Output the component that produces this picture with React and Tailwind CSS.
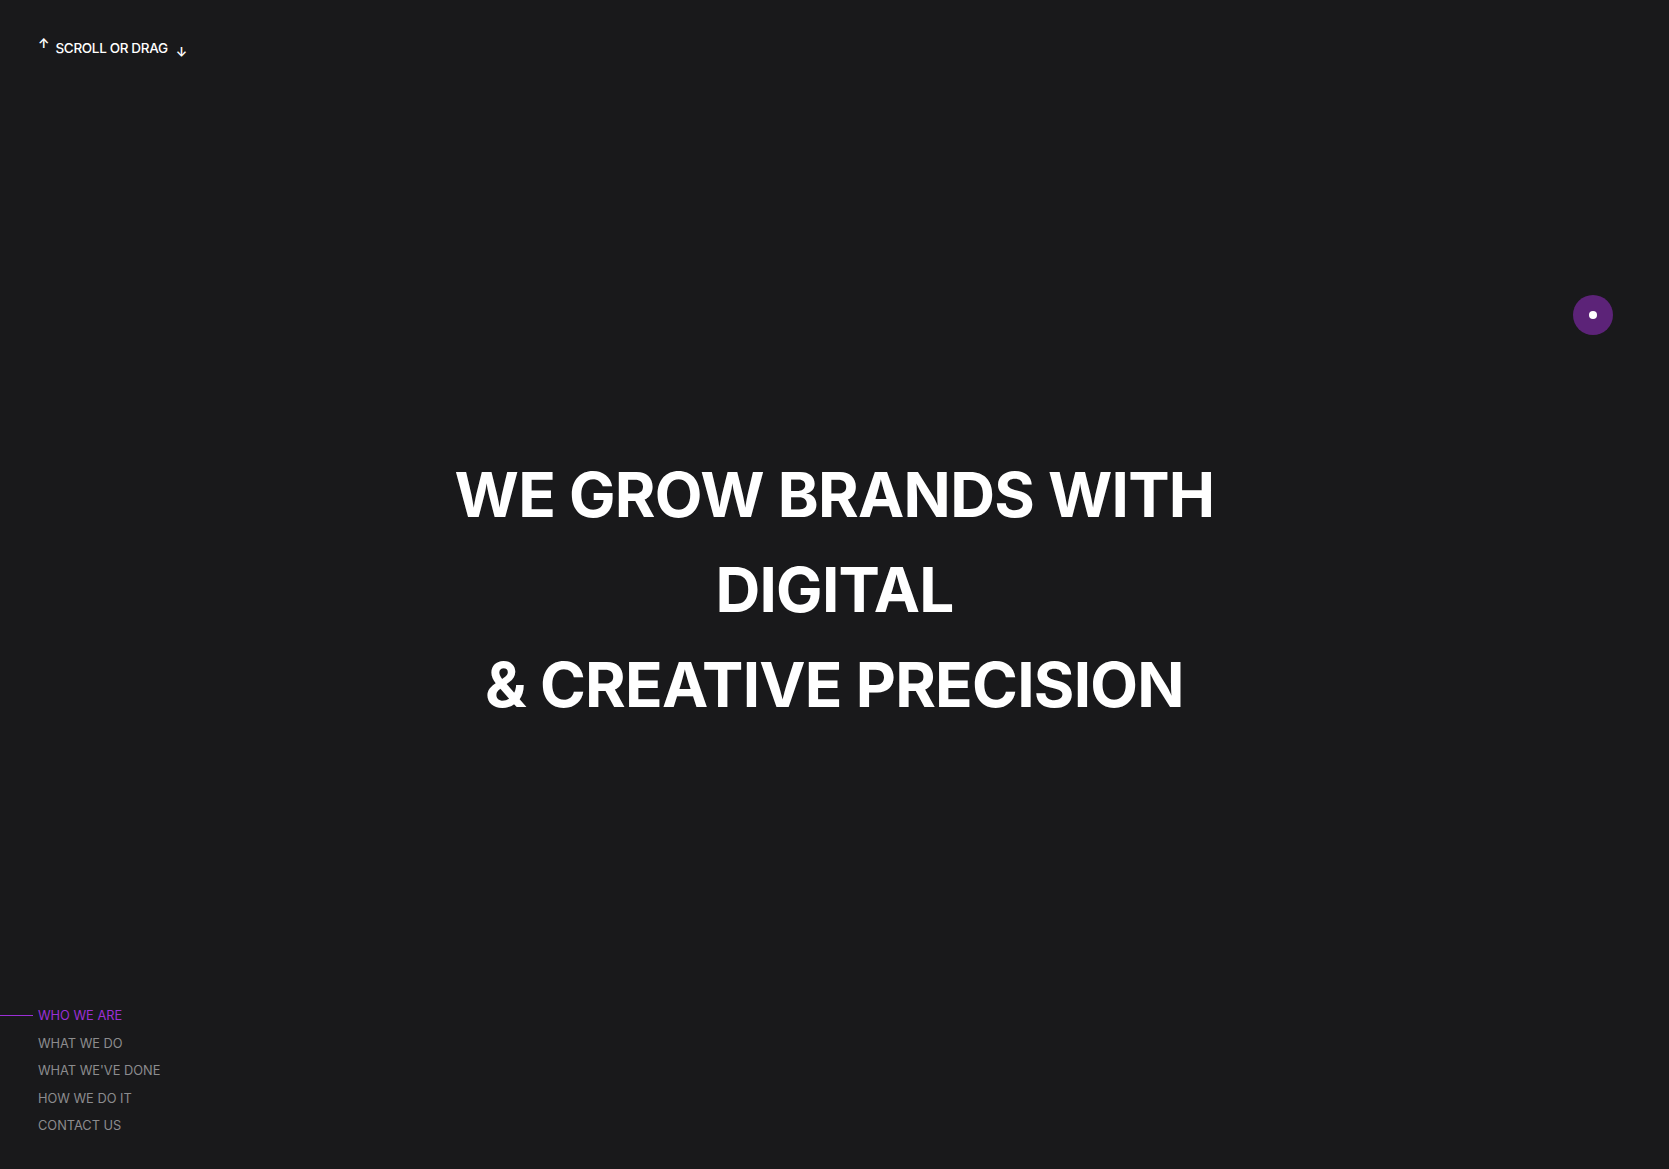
import React from "react";

const navItems = ["WHO WE ARE", "WHAT WE DO", "WHAT WE'VE DONE", "HOW WE DO IT", "CONTACT US"];

const App = () => {
  const active = 0;

  return (
    <div
      className="relative w-full h-[1169px] bg-[#19191b] overflow-hidden text-white"
      style={{ fontFamily: "Inter, 'Noto Sans', sans-serif" }}
    >
      {/* scroll hint */}
      <div className="absolute left-[38px] top-[36px] flex items-start gap-[6px]">
        <span className="text-[13px] leading-none font-semibold mt-[1px]">↑</span>
        <span className="text-[13.5px] leading-none font-medium tracking-tight mt-[6px]">SCROLL OR DRAG</span>
        <span className="text-[13px] leading-none font-semibold mt-[10px] ml-[2px]">↓</span>
      </div>

      {/* hero */}
      <main className="h-full flex items-center justify-center">
        <h1 className="text-center font-bold text-[62px] leading-[95px] tracking-[-0.012em] mt-[10px]">
          WE GROW BRANDS WITH
          <br />
          DIGITAL
          <br />
          &amp; CREATIVE PRECISION
        </h1>
      </main>

      {/* cursor dot */}
      <div className="absolute left-[1573px] top-[295px] w-[40px] h-[40px] rounded-full bg-[#5c2378] flex items-center justify-center">
        <div className="w-[8px] h-[8px] rounded-full bg-white" />
      </div>

      {/* section nav */}
      <nav className="absolute left-0 top-[1002px] flex flex-col">
        {navItems.map((item, i) => (
          <div key={item} className="flex items-center h-[27.5px]">
            <span className={`h-px w-[33px] mr-[5px] ${i === active ? "bg-[#9b2fd6]" : "bg-transparent"}`} />
            <span
              className={`text-[12.8px] ${i === active ? "text-[#9b2fd6]" : "text-[#8c8c8e]"}`}
            >
              {item}
            </span>
          </div>
        ))}
      </nav>
    </div>
  );
};

export default App;
